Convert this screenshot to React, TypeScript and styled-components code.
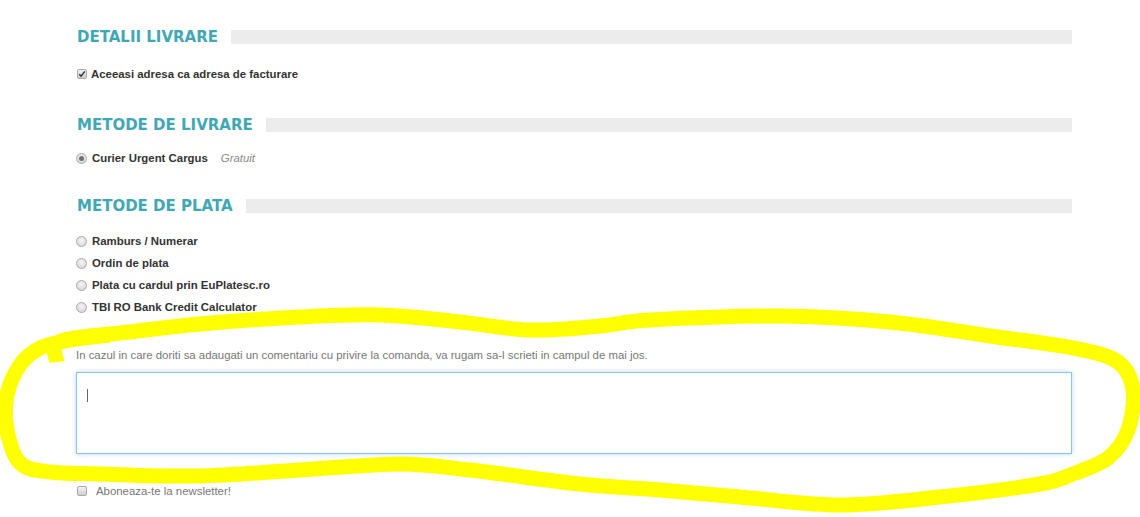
import React from 'react';
import styled, { createGlobalStyle } from 'styled-components';

const GlobalStyle = createGlobalStyle`
  html, body {
    margin: 0;
    padding: 0;
    background: #ffffff;
  }
  body {
    font-family: "Liberation Sans", Arial, sans-serif;
    color: #333;
  }
`;

const Page = styled.div`
  position: relative;
  width: 1140px;
  height: 517px;
  overflow: hidden;
  box-sizing: border-box;
  padding: 30px 68px 0 76px;
`;

const SectionHead = styled.div<{ $gap?: number }>`
  display: flex;
  align-items: center;
  height: 14px;
  margin-top: ${(p) => p.$gap ?? 0}px;
`;

const SectionTitle = styled.h2`
  margin: 0 13px 0 1px;
  font-family: "DejaVu Sans", Verdana, sans-serif;
  font-weight: bold;
  font-size: 15px;
  line-height: 14px;
  letter-spacing: 0;
  color: #3fa8b4;
  white-space: nowrap;
`;

const SectionBar = styled.div`
  flex: 1;
  height: 14px;
  background: #ececec;
`;

const OptionRow = styled.label<{ $gap?: number }>`
  display: flex;
  align-items: center;
  height: 22px;
  margin-top: ${(p) => p.$gap ?? 0}px;
  font-size: 11.4px;
  font-weight: bold;
  color: #333;
`;

const OptionList = styled.div<{ $gap?: number }>`
  display: flex;
  flex-direction: column;
  margin-top: ${(p) => p.$gap ?? 0}px;
`;

const Box = styled.span`
  display: inline-flex;
  align-items: center;
  justify-content: center;
  box-sizing: border-box;
  width: 10px;
  height: 10px;
  margin: 0 4px 0 1px;
  border: 1px solid #a9a9a9;
  border-radius: 2px;
  background: linear-gradient(#f2f2f2, #cfcfcf);
`;

const Radio = styled.span<{ $checked?: boolean }>`
  display: inline-flex;
  align-items: center;
  justify-content: center;
  box-sizing: border-box;
  width: 11px;
  height: 11px;
  margin: 0 5px 0 0;
  border: 1px solid #aaaaaa;
  border-radius: 50%;
  background: radial-gradient(circle at 50% 35%, #f4f4f4, #d2d2d2);

  &::after {
    content: '';
    display: ${(p) => (p.$checked ? 'block' : 'none')};
    width: 5px;
    height: 5px;
    border-radius: 50%;
    background: #6f6f6f;
  }
`;

const Note = styled.span`
  margin-left: 13px;
  font-weight: normal;
  font-style: italic;
  color: #8a8a8a;
`;

const Hint = styled.p`
  margin: 30px 0 0;
  font-size: 11.4px;
  line-height: 14px;
  color: #777;
`;

const CommentBox = styled.div`
  box-sizing: border-box;
  height: 82px;
  margin-top: 10px;
  padding: 16px 10px;
  border: 1px solid #8fc3ee;
  background: #fff;
  box-shadow: 0 0 5px rgba(102, 175, 233, 0.45);
`;

const Caret = styled.span`
  display: block;
  width: 1px;
  height: 13px;
  background: #666;
`;

const Newsletter = styled.label`
  display: flex;
  align-items: center;
  height: 14px;
  margin-top: 30px;
  font-size: 11.4px;
  color: #777;

  ${Box} {
    margin-right: 9px;
  }
`;

const Scribble = styled.svg`
  position: absolute;
  left: 0;
  top: 0;
  pointer-events: none;
`;

type Pt = [number, number];

// freehand highlight drawn over the comment field
const loop: Pt[] = [
  [57, 362], [55, 345], [75, 338], [120, 333], [200, 324], [300, 317],
  [380, 315], [460, 322], [530, 330], [600, 326], [650, 320], [780, 316],
  [890, 322], [990, 336], [1073, 348], [1118, 362], [1133, 390], [1128, 430],
  [1108, 458], [1070, 475], [1040, 484], [940, 497], [840, 505], [740, 497],
  [660, 490], [580, 484], [470, 470], [400, 464], [300, 470], [200, 476],
  [100, 474], [50, 472], [20, 463], [7, 430], [7, 395], [20, 365], [40, 348],
  [70, 340], [110, 335],
];

function smoothPath(pts: Pt[]) {
  let d = `M${pts[0][0]} ${pts[0][1]}`;
  for (let i = 0; i < pts.length - 1; i++) {
    const p0 = pts[i - 1] || pts[i];
    const p1 = pts[i];
    const p2 = pts[i + 1];
    const p3 = pts[i + 2] || p2;
    const c1x = p1[0] + (p2[0] - p0[0]) / 6;
    const c1y = p1[1] + (p2[1] - p0[1]) / 6;
    const c2x = p2[0] - (p3[0] - p1[0]) / 6;
    const c2y = p2[1] - (p3[1] - p1[1]) / 6;
    d += ` C${c1x.toFixed(1)} ${c1y.toFixed(1)} ${c2x.toFixed(1)} ${c2y.toFixed(1)} ${p2[0]} ${p2[1]}`;
  }
  return d;
}

const CheckMark = () => (
  <svg width="8" height="8" viewBox="0 0 8 8">
    <path d="M1.2 4.2 L3.1 6.1 L6.8 1.4" fill="none" stroke="#333" strokeWidth="1.5" />
  </svg>
);

const paymentMethods = [
  'Ramburs / Numerar',
  'Ordin de plata',
  'Plata cu cardul prin EuPlatesc.ro',
  'TBI RO Bank Credit Calculator',
];

export default function App() {
  return (
    <>
      <GlobalStyle />
      <Page>
        <SectionHead>
          <SectionTitle>DETALII LIVRARE</SectionTitle>
          <SectionBar />
        </SectionHead>
        <OptionRow $gap={19}>
          <Box>
            <CheckMark />
          </Box>
          Aceeasi adresa ca adresa de facturare
        </OptionRow>

        <SectionHead $gap={33}>
          <SectionTitle>METODE DE LIVRARE</SectionTitle>
          <SectionBar />
        </SectionHead>
        <OptionRow $gap={15}>
          <Radio $checked />
          Curier Urgent Cargus
          <Note>Gratuit</Note>
        </OptionRow>

        <SectionHead $gap={30}>
          <SectionTitle>METODE DE PLATA</SectionTitle>
          <SectionBar />
        </SectionHead>
        <OptionList $gap={17}>
          {paymentMethods.map((label, index) => (
            <OptionRow key={`payment-${index}`}>
              <Radio />
              {label}
            </OptionRow>
          ))}
        </OptionList>

        <Hint>
          In cazul in care doriti sa adaugati un comentariu cu privire la comanda, va rugam sa-l scrieti in campul de mai jos.
        </Hint>
        <CommentBox>
          <Caret />
        </CommentBox>

        <Newsletter>
          <Box />
          Aboneaza-te la newsletter!
        </Newsletter>

        <Scribble width="1140" height="517" viewBox="0 0 1140 517">
          <path
            d={smoothPath(loop)}
            fill="none"
            stroke="#ffff00"
            strokeWidth="15"
            strokeLinecap="butt"
            strokeLinejoin="round"
          />
        </Scribble>
      </Page>
    </>
  );
}
